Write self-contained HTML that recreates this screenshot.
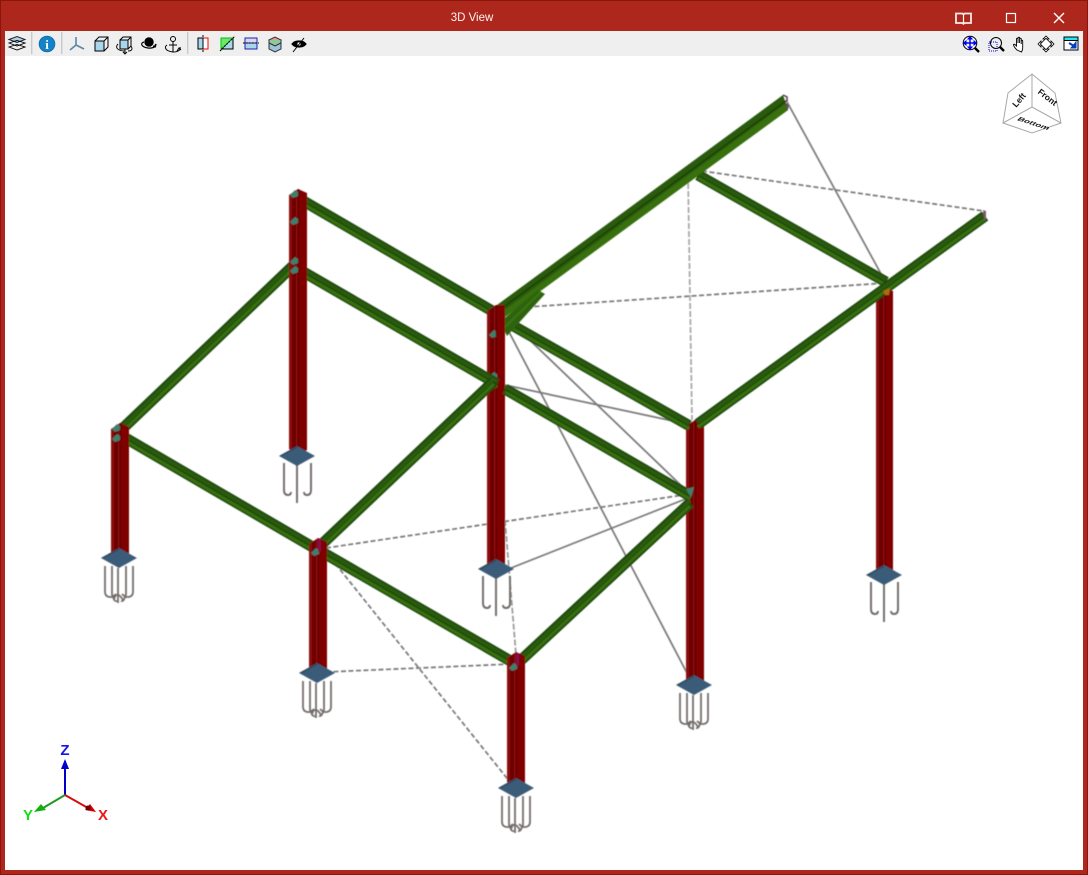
<!DOCTYPE html>
<html><head><meta charset="utf-8"><title>3D View</title>
<style>
html,body{margin:0;padding:0;background:#fff}
body{width:1088px;height:875px;overflow:hidden;position:relative;font-family:"Liberation Sans",sans-serif}
svg{position:absolute;left:0;top:0}
.b{fill:none}
.d{stroke:#1f4a0a;stroke-width:11}
.t{stroke:#2a5a0d;stroke-width:3.500}
.l{stroke:#38700f;stroke-width:3}
</style></head><body>
<svg width="1088" height="875" viewBox="0 0 1088 875" xmlns="http://www.w3.org/2000/svg">
<defs>
<filter id="soft" x="-5%" y="-5%" width="110%" height="110%"><feGaussianBlur stdDeviation="0.4"/></filter>
<g id="c130"><polygon points="0,6 9,0 9,136 0,130" fill="#8a0a0a"/><polygon points="3,5 7,2 7,134 3,132" fill="#6e0505"/><polygon points="9,0 18,4 18,131 9,136" fill="#800404"/><rect x="8.800" y="0" width="1" height="136" fill="#4a0000"/></g>
<g id="c260"><polygon points="0,6 9,0 9,266 0,260" fill="#8a0a0a"/><polygon points="3,5 7,2 7,264 3,262" fill="#6e0505"/><polygon points="9,0 18,4 18,261 9,266" fill="#800404"/><rect x="8.800" y="0" width="1" height="266" fill="#4a0000"/></g>
<g id="c282"><polygon points="0,4 9,0 9,286 0,282" fill="#8a0a0a"/><polygon points="3,4 7,2 7,284 3,282" fill="#6e0505"/><polygon points="9,0 17,3 17,282 9,286" fill="#800404"/><rect x="8.800" y="0" width="1" height="286" fill="#4a0000"/></g>
<g id="plate"><polygon points="-18,0 0,-10 18,0 0,10" fill="#3a5b78"/><polygon points="-18,0 0,-10 0,-8 -15,0" fill="#2f4a62"/></g>
<g id="a3" fill="none" stroke="#6f6967" stroke-width="1.900"><path d="M-13,7V34Q-13,39 -9,39 -6,39 -6,36"/><path d="M14,7V34Q14,39 10,39 7,39 7,36"/><path d="M0,9V47"/></g>
<g id="a6b" fill="none" stroke="#736d6b" stroke-width="1.800"><path d="M-14,8V34Q-14,38 -10,39L-5,39"/><path d="M14,8V34Q14,38 10,39L5,39"/><path d="M-7,8V36Q-7,40 -3,36"/><path d="M7,8V36Q7,40 3,36"/><path d="M-1,10V45"/><path d="M-5,42Q-4,36 -1,37 1,37 4,42"/><path d="M-6,38Q-5,44 -2,43"/><path d="M6,38Q5,44 2,43"/></g>
<polygon id="gu" points="0,3 5,-2 8,0 8,4 3,6" fill="#3f7f6c"/>
<path id="bF" d="M300,199L494,312"/>
<path id="bG" d="M300,270L497,384"/>
<path id="bC" d="M120,431L296,263"/>
<path id="bM" d="M698,175L886,282"/>
<path id="bK" d="M698,424L985,216"/>
<path id="bH" d="M510,324L689,425.500"/>
<path id="bI" d="M505,389L690,496"/>
<path id="bD" d="M320,546L494,381"/>
<path id="bE" d="M519,662L690,503"/>
<path id="bA" d="M122,436L316,549"/>
<path id="bB" d="M322,552L514,663"/>
</defs>

<!-- window frame -->
<rect width="1088" height="875" fill="#ae271c"/>
<rect x=".5" y=".5" width="1087" height="874" fill="none" stroke="#8c140c"/>
<rect x="5" y="31" width="1078" height="839" fill="#fff"/>
<rect x="5" y="31" width="1078" height="25" fill="#efefef"/>
<text x="472" y="21" fill="#fff" font-size="11.500" text-anchor="middle" opacity=".95">3D View</text>

<!-- window buttons -->
<g fill="none" stroke="#fff" stroke-width="1.200">
<path d="M956,13.500h6.500l1,1 1-1h6.500v9.500h-6.500l-1,.8-1-.8h-6.500z" stroke-width="1.800" opacity=".9"/><path d="M963.500,14v9"/>
<rect x="1006.500" y="13.500" width="9" height="9"/>
<path d="M1054,13l10,10M1064,13l-10,10" stroke-width="1.400"/>
</g>

<!-- toolbar separators -->
<g fill="#c9c9c9"><rect x="31" y="32" width="1.400" height="22"/><rect x="61" y="32" width="1.400" height="22"/><rect x="187" y="32" width="1.400" height="22"/></g>

<!-- left toolbar icons -->
<g fill="none" stroke="#000" stroke-width="1">
<g><path d="M9,39.500l8-3 8,3-8,3z" fill="#a8d4ea" stroke="#222"/><path d="M9,43l8,3 8-3-8-2.500zM9,47l8,3 8-3-8-2.500z" stroke-width=".9"/></g>
<circle cx="47" cy="44" r="7.800" fill="#1382c6" stroke="#1272ad"/><text x="47" y="49" font-size="13" font-weight="bold" fill="#fff" stroke="none" text-anchor="middle" font-family="Liberation Serif,serif">i</text>
<path d="M76,37v8l-6,5M76,45l8,4" stroke="#5b88a3" stroke-width="1.600"/>
<g><path d="M95,41h9v10h-9z" fill="#a9d6ea"/><path d="M95,41l4-4h9v10l-4,4M104,41l4-4"/></g>
<g><path d="M120,40h8v9h-8z" fill="#a9d6ea"/><path d="M120,40l3-3h8v9l-3,3M128,40l3-3"/><path d="M118,44c-3,3-1,7 7,7M125,49v5M123,52l2,2 2-2M131,46c2,3 1,5-3,5" stroke-width=".9"/></g>
<g><circle cx="149" cy="42" r="4.200" fill="#000"/><path d="M144,42c-4,1-3,5 4,6 5,.5 8-1 8-4M156,44l-2,3M156,47l-3-1" stroke-width="1.200"/></g>
<g><circle cx="173" cy="39" r="2.500"/><path d="M173,41.500v11M169,45h8M167,45c-3,2-2,6 6,7 5,0 8-2 7-5M177,51l2-3 2,2"/></g>
<g><rect x="198" y="38" width="5" height="11" fill="#a9d6ea"/><rect x="203" y="38" width="5" height="11" fill="#fff" stroke="#f00"/><rect x="198" y="38" width="5" height="11"/><path d="M203,35v17" stroke-dasharray="2 1"/></g>
<g><rect x="221" y="38" width="12" height="11" fill="#a9d6ea"/><path d="M221,49V38h12z" fill="#6fe76f" stroke="#00c000"/><path d="M221,49h12V38"/><path d="M220,51l15-15" stroke-dasharray="2 1"/></g>
<g><rect x="245" y="38" width="12" height="11" fill="#a9d6ea" stroke="#2222aa"/><rect x="245" y="38" width="12" height="5" fill="#d8d4f4" stroke="#2222aa"/><path d="M243,43h16" stroke-dasharray="2 1"/></g>
<g stroke="#333"><path d="M269,40l6-3 6,3-6,3z" fill="#e89a90"/><path d="M269,40v3l6,3 6-3v-3" fill="#8fc99a"/><path d="M269,43v4l6,3 6-3v-4l-6,3z" fill="#9cc4dc"/><path d="M269,47v2l6,3 6-3v-2" fill="#9cc4dc"/></g>
<g><path d="M292,44c3-4 11-4 14,0-3,4-11,4-14,0z" fill="#000" stroke-width="1.200"/><circle cx="299" cy="44" r="1.600" fill="#fff" stroke="none"/><path d="M293,52l11-14"/></g>
</g>

<!-- right toolbar icons -->
<g fill="none" stroke="#000">
<g><circle cx="970" cy="43" r="6.800" fill="#f3f3f3"/><path d="M975,48l4,4" stroke-width="2.400"/><path d="M970,38v10M965,43h10" stroke="#0000f0" stroke-width="1.400"/><path d="M968,39l2-2.500 2,2.500zM968,47l2,2.500 2-2.500zM966,41l-2.500,2 2.500,2zM974,41l2.500,2-2.500,2z" fill="#0000f0" stroke="#0000f0"/></g>
<g><circle cx="996" cy="43" r="5.500"/><path d="M1000,47l4,4" stroke-width="2.400"/><rect x="989" y="42" width="8" height="9" stroke="#0000ee" stroke-dasharray="1 1"/></g>
<path d="M1017,50c-2-2-3-3-3.500-5 0-1 1-1 2,0l1,1v-7c0-1 1.500-1 1.500,0v4-5c0-1 1.600-1 1.600,0v5-4c0-1 1.600-1 1.600,0v5-3c0-1 1.500-1 1.500,0v7c0,2-.7,3-1.200,4z" fill="#fff" stroke-width=".9"/>
<g stroke-width=".8"><path d="M1046,36l-3,3h6zM1046,52l-3-3h6zM1038,44l3-3v6zM1054,44l-3-3v6z" fill="#fff"/><rect x="1042" y="40" width="8" height="8" transform="rotate(45 1046 44)" fill="#fff"/></g>
<g stroke-width="1"><rect x="1064" y="37" width="14" height="13" fill="#fff"/><rect x="1064" y="37" width="14" height="3.500" fill="#27e6f2"/><path d="M1069,43l5,3" stroke="#0040c0" stroke-width="2"/><path d="M1076,42v6h-5z" fill="#0040c0" stroke="#0040c0"/></g>
</g>

<!-- cube -->
<g fill="none" stroke="#a8a8a8" stroke-width="1">
<path d="M1032,74L1008,93 1003,123 1032,133 1061,123 1055,93z"/><path d="M1032,74V107M1003,123L1032,107 1061,123"/>
</g>
<g font-size="8.500" font-weight="bold" fill="#111">
<text x="1019" y="103" text-anchor="middle" transform="rotate(-50 1019 100)">Left</text>
<text x="1047" y="100" text-anchor="middle" transform="rotate(38 1047 98)">Front</text>
<text transform="translate(1032,125) rotate(18) skewX(-30) scale(1.100,.7)" text-anchor="middle">Bottom</text>
</g>

<g filter="url(#soft)">
<!-- brace lines -->
<g fill="none" stroke="#777" stroke-width="1.700">
<path d="M786,100L886,283"/>
<path d="M512,323L690,494"/>
<path d="M508,330L688,675"/>
<path d="M505,385L692,425"/>
<path d="M506,570L688,498"/>
<g stroke-dasharray="5 2.500">
<path d="M702,171L984,211"/>
<path d="M512,308L886,283"/>
<path d="M326,548L690,494"/>
<path d="M326,672L512,664"/>
<path d="M326,552L510,782"/>
</g>
<path d="M688,175L692,420" stroke="#a5a5a5" stroke-dasharray="6 2"/>
<path d="M505,520L516,655" stroke="#999" stroke-dasharray="6 2"/>
</g>

<!-- beams going to column 2 -->
<g class="b">
<use href="#bF" class="d"/><use href="#bF" class="t" y="-2.500"/><use href="#bF" class="l" y="3"/>
<use href="#bC" class="d"/><use href="#bC" class="t" y="-2.500"/><use href="#bC" class="l" y="3"/>
<use href="#bM" class="d"/><use href="#bM" class="t" y="-2.500"/><use href="#bM" class="l" y="3"/>
</g>

<!-- column 7 -->
<use href="#c282" x="876" y="288"/>
<use href="#a3" x="884" y="575"/><use href="#plate" x="884" y="575"/>

<!-- column 4 -->
<use href="#c260" x="487" y="305"/>
<use href="#gu" x="489" y="332"/><use href="#gu" x="489" y="374"/><use href="#gu" x="489" y="382"/>
<use href="#a3" x="496" y="569"/><use href="#plate" x="496" y="569"/>

<!-- column 6 + beams in front -->
<use href="#c260" x="686" y="420"/>
<use href="#a6b" x="694" y="685"/><use href="#plate" x="694" y="685"/>
<g class="b">
<use href="#bG" class="d"/><use href="#bG" class="t" y="-2.500"/><use href="#bG" class="l" y="3"/>
<use href="#bD" class="d"/><use href="#bD" class="t" y="-2.500"/><use href="#bD" class="l" y="3"/>
<use href="#bH" class="d"/><use href="#bH" class="t" y="-2.500"/><use href="#bH" class="l" y="3"/>
<use href="#bI" class="d"/><use href="#bI" class="t" y="-2.500"/><use href="#bI" class="l" y="3"/>
<use href="#bE" class="d"/><use href="#bE" class="t" y="-2.500"/><use href="#bE" class="l" y="3"/>
<use href="#bK" class="d"/><use href="#bK" class="t" y="-2.500"/><use href="#bK" class="l" y="3"/>
</g>
<path d="M983,210l3,1v9l-2-1z" fill="#7b5a6a"/>
<polygon points="883,291 890,288 889,295 885,295" fill="#b06a10"/>
<polygon points="686,489 694,487 691,498" fill="#3f7f6c"/>

<!-- long beam J and knee brace -->
<polygon points="497,305 783,95 788,110 500,320" fill="#2a5a0c"/>
<polygon points="499,314 785,104 788,110 501,320" fill="#376f10"/>
<path d="M498,311L786,101" stroke="#1a4206" stroke-width="1.400" fill="none"/>
<polygon points="500,322 538,290 545,294 507,336" fill="#2f6410"/>
<path d="M504,328L541,292" stroke="#3a7412" stroke-width="2" fill="none"/>
<path d="M783,95l4,2 0,4M785,103l3,3-1,4" stroke="#5e3a4c" stroke-width="1.500" fill="none"/>
<!-- column 4 upper part restored over beams -->
<rect x="496" y="305" width="9" height="31" fill="#800404"/>
<rect x="495.800" y="305" width="1" height="31" fill="#4a0000"/>
<rect x="496" y="340" width="9" height="34" fill="#800404"/>
<rect x="495.800" y="340" width="1" height="34" fill="#4a0000"/>

<!-- column 2 -->
<use href="#c260" x="289" y="189"/>
<use href="#gu" x="290" y="192"/><use href="#gu" x="290" y="219"/><use href="#gu" x="290" y="259"/><use href="#gu" x="290" y="268"/>
<use href="#a3" x="297" y="456"/><use href="#plate" x="297" y="456"/>

<!-- front beams -->
<g class="b">
<use href="#bA" class="d"/><use href="#bA" class="t" y="-2.500"/><use href="#bA" class="l" y="3"/>
<use href="#bB" class="d"/><use href="#bB" class="t" y="-2.500"/><use href="#bB" class="l" y="3"/>
</g>

<!-- column 1 -->
<use href="#c130" x="111" y="423"/>
<use href="#gu" x="112" y="426"/><use href="#gu" x="112" y="436"/>
<use href="#a6b" x="119" y="558"/><use href="#plate" x="119" y="558"/>

<!-- column 3 -->
<use href="#c130" x="309" y="538"/>
<use href="#gu" x="311" y="550"/>
<path d="M318,538l3,1v12l-3,1z" fill="#8a0c4a"/>
<use href="#a6b" x="317" y="673"/><use href="#plate" x="317" y="673"/>

<!-- column 5 -->
<use href="#c130" x="507" y="652"/>
<use href="#gu" x="509" y="665"/>
<path d="M516,652l3,2v11l-3,1z" fill="#8a0c4a"/>
<use href="#a6b" x="516" y="788"/><use href="#plate" x="516" y="788"/>
</g>

<!-- axes -->
<g fill="none" stroke-width="2">
<path d="M65,795V768" stroke="#0000c8"/>
<path d="M65,795L43,808" stroke="#1f9a1f"/>
<path d="M65,795L88,808" stroke="#d01010"/>
</g>
<polygon points="65,759 69,769 61,769" fill="#0000c8"/>
<polygon points="34,812 41,804 46,810" fill="#10b010"/>
<polygon points="96,812 85,810 90,804" fill="#d00000"/>
<circle cx="88" cy="808" r="2.500" fill="#700000"/>
<g font-size="15" font-weight="bold" text-anchor="middle">
<text x="65" y="755" fill="#1414e6">Z</text>
<text x="28" y="820" fill="#14e014">Y</text>
<text x="103" y="820" fill="#f01414">X</text>
</g>
</svg>
</body></html>
